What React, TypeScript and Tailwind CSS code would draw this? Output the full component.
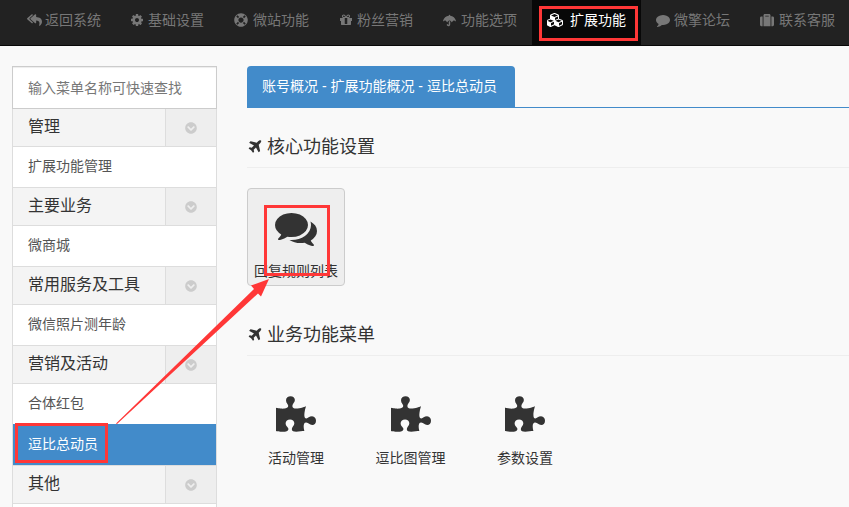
import React from 'react';
import {
  FaReplyAll,
  FaLifeRing,
  FaUmbrella,
  FaSuitcase,
  FaChevronCircleDown,
  FaPuzzlePiece,
} from 'react-icons/fa';

type GlyphProps = { d: string; box?: string; className?: string };

function Glyph({ d, box = '0 0 1792 1792', className }: GlyphProps) {
  return (
    <svg viewBox={box} fill="currentColor" className={className} aria-hidden="true">
      <path d={d} />
    </svg>
  );
}

const COG =
  'M1152 896q0-106-75-181t-181-75-181 75-75 181 75 181 181 75 181-75 75-181zm512-109v222q0 12-8 23t-20 13l-185 28q-19 54-39 91 35 50 107 138 10 12 10 25t-9 23q-27 37-99 108t-94 71q-12 0-26-9l-138-108q-44 23-91 38-16 136-29 186-7 28-36 28h-222q-14 0-24.5-8.5t-11.5-21.5l-28-184q-49-16-90-37l-141 107q-10 9-25 9-14 0-25-11-126-114-165-168-7-10-7-23 0-12 8-23 15-21 51-66.5t54-70.5q-27-50-41-99l-183-27q-13-2-21-12.5t-8-23.5v-222q0-12 8-23t19-13l186-28q14-46 39-92-40-57-107-138-10-12-10-24 0-10 9-23 26-36 98.5-107.5t94.5-71.5q13 0 26 10l138 107q44-23 91-38 16-136 29-186 7-28 36-28h222q14 0 24.5 8.5t11.5 21.5l28 184q49 16 90 37l142-107q9-9 24-9 13 0 25 10 129 119 165 170 7 8 7 22 0 12-8 23-15 21-51 66.5t-54 70.5q26 50 41 98l183 28q13 2 21 12.5t8 23.5z';
const GIFT =
  'M1056 1356v-716h-320v716q0 25 18 38.5t46 13.5h192q28 0 46-13.5t18-38.5zm-456-844h195l-126-161q-26-31-69-31-40 0-68 28t-28 68 28 68 68 28zm688-96q0-40-28-68t-68-28q-43 0-69 31l-125 161h194q40 0 68-28t28-68zm376 256v320q0 14-9 23t-23 9h-96v416q0 40-28 68t-68 28h-1088q-40 0-68-28t-28-68v-416h-96q-14 0-23-9t-9-23v-320q0-14 9-23t23-9h440q-93 0-158.5-65.5t-65.5-158.5 65.5-158.5 158.5-65.5q107 0 168 77l128 165 128-165q61-77 168-77 93 0 158.5 65.5t65.5 158.5-65.5 158.5-158.5 65.5h440q14 0 23 9t9 23z';
const CUBES =
  'M512 1632l384-192v-314l-384 164v342zm-64-454l404-173-404-173-404 173zm1088 454l384-192v-314l-384 164v342zm-64-454l404-173-404-173-404 173zm-448-293l384-165v-266l-384 164v267zm-64-379l441-189-441-189-441 189zm1088 518v416q0 36-19 67t-52 47l-448 224q-25 14-57 14t-57-14l-448-224q-4-2-7-4-2 2-7 4l-448 224q-25 14-57 14t-57-14l-448-224q-33-16-52-47t-19-67v-416q0-38 21.5-70t56.5-48l434-186v-400q0-38 21.5-70t56.5-48l448-192q23-10 50-10t50 10l448 192q35 16 56.5 48t21.5 70v400l434 186q36 16 57 48t21 70z';
const COMMENT =
  'M1792 896q0 174-120 321.5t-326 233-450 85.5q-70 0-145-8-198 175-460 242-49 14-114 22-17 2-30.5-9t-17.5-29v-1q-3-4-.5-12t2-10 4.5-9.5l6-9 7-8.5 8-9q7-8 31-34.5t34.5-38 31-39.5 32.5-51 27-59 26-76q-157-89-247.5-220t-90.5-281q0-130 71-248.5t191-204.5 286-136.5 348-50.5q244 0 450 85.5t326 233 120 321.5z';
const COMMENTS =
  'M1408 768q0 139-94 257t-256.5 186.5-353.5 68.5q-86 0-176-16-124 88-278 128-36 9-86 16h-3q-11 0-20.5-8t-11.5-21q-1-3-1-6.5t.5-6.5 2-6l2.5-5 3.5-5.5 4-5 4.5-5 4-4.5q5-6 23-25t26-29.5 22.5-29 25-38.5 20.5-44q-124-72-195-177t-71-224q0-139 94-257t256.5-186.5 353.5-68.5 353.5 68.5 256.5 186.5 94 257zm384 256q0 120-71 224.5t-195 176.5q10 24 20.5 44t25 38.5 22.5 29 26 29.5 23 25q1 1 4 4.5t4.5 5 4 5 3.5 5.5l2.5 5 2 6 .5 6.5-1 6.5q-3 14-13 22t-22 7q-50-7-86-16-154-40-278-128-90 16-176 16-271 0-472-132 58 4 88 4 161 0 309-45t264-129q125-92 192-212t67-254q0-77-23-152 129 71 204 178t75 230z';
const PLANE =
  'M1568 160q44 52 12 148t-108 172l-161 161 160 696q5 19-12 33l-128 96q-7 6-19 6-4 0-7-1-15-3-21-16l-279-508-259 259 53 194q5 17-8 31l-96 96q-9 9-23 9h-2q-15-2-24-13l-189-252-252-189q-11-7-13-23-1-13 9-25l96-97q9-9 23-9 6 0 8 1l194 53 259-259-508-279q-14-8-17-24-2-16 9-27l128-128q14-13 30-8l665 159 160-160q76-76 172-108t148 12z';

type NavEntry = { label: string; width: string; icon: React.ReactNode; active?: boolean };

const nav: NavEntry[] = [
  { label: '返回系统', width: 'w-[104px]', icon: <FaReplyAll className="h-[14px] w-[15px]" /> },
  { label: '基础设置', width: 'w-[103px]', icon: <Glyph d={COG} className="-ml-px h-[14px] w-[14px]" /> },
  { label: '微站功能', width: 'w-[105px]', icon: <FaLifeRing className="h-[14px] w-[14px]" /> },
  { label: '粉丝营销', width: 'w-[104px]', icon: <Glyph d={GIFT} className="h-[14px] w-[14px]" /> },
  { label: '功能选项', width: 'w-[104px]', icon: <FaUmbrella className="h-[13px] w-[13px]" /> },
  {
    label: '扩展功能',
    width: 'w-[109px]',
    icon: <Glyph d={CUBES} box="0 0 2304 1792" className="h-[14px] w-[18px]" />,
    active: true,
  },
  { label: '微擎论坛', width: 'w-[104px]', icon: <Glyph d={COMMENT} className="h-[14px] w-[14px]" /> },
  { label: '联系客服', width: 'w-[105px]', icon: <FaSuitcase className="h-[14px] w-[14px]" /> },
];

function MenuHead({ label }: { label: string }) {
  return (
    <div className="flex h-[38px] border-b border-[#ddd] bg-[#f4f4f4]">
      <div className="flex-1 pl-[15px] text-base leading-[36px] text-[#333]">{label}</div>
      <div className="flex w-[51px] items-center justify-center border-l border-[#ddd] bg-[#eee] pt-px text-[#ccc]">
        <FaChevronCircleDown className="h-[12px] w-[12px]" />
      </div>
    </div>
  );
}

function MenuItem({ label, last }: { label: string; last?: boolean }) {
  return (
    <div
      className={
        last
          ? 'h-[40px] bg-white pl-[15px] leading-[39px] text-[#555]'
          : 'h-[41px] border-b border-[#ddd] bg-white pl-[15px] leading-[39px] text-[#555]'
      }
    >
      {label}
    </div>
  );
}

function Heading({ label }: { label: string }) {
  return (
    <h4 className="flex h-[41px] items-center gap-[4px] border-b border-[#eee] text-lg text-[#333]">
      <Glyph d={PLANE} className="h-[18px] w-[16px]" />
      <span className="leading-[20px]">{label}</span>
    </h4>
  );
}

function Tile({ label, width }: { label: string; width: string }) {
  return (
    <div className={`flex h-[98px] flex-col items-center text-[#333] ${width}`}>
      <FaPuzzlePiece className="mt-[18px] h-[40px] w-[40px]" />
      <span className="mt-[14px] leading-[20px]">{label}</span>
    </div>
  );
}

export default function App() {
  return (
    <div className="relative h-[507px] w-[849px] overflow-hidden bg-[#f9f9f9] font-['Liberation_Sans','Noto_Sans_CJK_SC',sans-serif] text-sm">
      <nav className="flex h-[46px] border-b border-[#080808] bg-[#222] pl-[12px]">
        {nav.map((n) => (
          <a
            key={n.label}
            className={`flex h-[45px] shrink-0 items-center justify-between px-[15px] pb-[5px] ${n.width} ${
              n.active ? 'bg-[#080808] text-white' : 'text-[#777]'
            }`}
          >
            {n.icon}
            <span className="whitespace-nowrap leading-[20px]">{n.label}</span>
          </a>
        ))}
      </nav>

      <div className="flex pt-[20px] pl-[12px]">
        <aside className="h-[441px] w-[205px] shrink-0 overflow-hidden">
          <input
            className="block h-[43px] w-[205px] border border-[#ccc] bg-white px-[15px] text-sm shadow-[inset_0_1px_1px_rgba(0,0,0,0.075)] outline-none placeholder:text-[#777]"
            placeholder="输入菜单名称可快速查找"
          />
          <div className="h-[398px] border-x border-[#ddd] bg-white">
            <MenuHead label="管理" />
            <MenuItem label="扩展功能管理" />
            <MenuHead label="主要业务" />
            <MenuItem label="微商城" />
            <MenuHead label="常用服务及工具" />
            <MenuItem label="微信照片测年龄" />
            <MenuHead label="营销及活动" />
            <MenuItem label="合体红包" last />
            <div className="h-[42px] border-b border-[#ddd] bg-[#428bca] pl-[15px] leading-[41px] text-white">
              逗比总动员
            </div>
            <MenuHead label="其他" />
          </div>
        </aside>

        <main className="ml-[30px] w-[602px]">
          <div className="flex h-[42px] border-b border-[#428bca]">
            <div className="h-[42px] w-[268px] rounded-t bg-[#428bca] pl-[15px] leading-[41px] whitespace-nowrap text-white">
              账号概况 - 扩展功能概况 - 逗比总动员
            </div>
          </div>

          <section className="pt-[19px]">
            <Heading label="核心功能设置" />
            <div className="mt-[20px] flex h-[98px] w-[98px] flex-col items-center rounded border border-[#ccc] bg-[#eee] text-[#333]">
              <Glyph d={COMMENTS} className="mt-[18px] h-[42px] w-[42px] shrink-0" />
              <span className="mt-[12px] leading-[20px] whitespace-nowrap">回复规则列表</span>
            </div>
          </section>

          <section className="pt-[29px]">
            <Heading label="业务功能菜单" />
            <div className="mt-[20px] flex">
              <Tile label="活动管理" width="w-[98px]" />
              <Tile label="逗比图管理" width="w-[131px]" />
              <Tile label="参数设置" width="w-[98px]" />
            </div>
          </section>
        </main>
      </div>

      <div className="absolute top-[6px] left-[539px] h-[35px] w-[99px] border-3 border-[#ff3737]" />
      <div className="absolute top-[205px] left-[264px] h-[71px] w-[66px] border-3 border-[#ff3737]" />
      <div className="absolute top-[423px] left-[15px] h-[40px] w-[93px] border-3 border-[#ff3737]" />
      <svg viewBox="0 0 849 507" className="pointer-events-none absolute inset-0 h-[507px] w-[849px]">
        <polygon points="116,423.5 254,289 251,285.5 269,279 261,296.5 258,293.5 117,424" fill="#ff3737" />
      </svg>
    </div>
  );
}
